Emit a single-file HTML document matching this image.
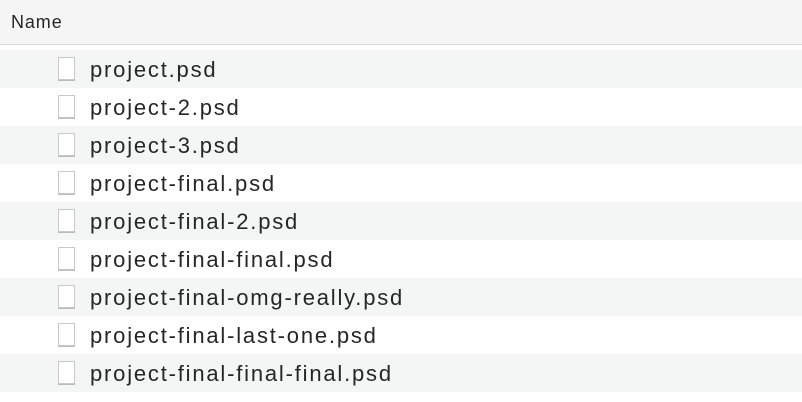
<!DOCTYPE html>
<html><head><style>
body{margin:0;width:802px;height:402px;overflow:hidden;background:#fff;font-family:"Liberation Sans",sans-serif;}
.h{height:44px;background:#f5f5f5;border-bottom:1px solid #d8d8d8;font-size:18px;letter-spacing:0.9px;color:#262626;line-height:44px;padding-left:11px;}
.gap{height:5px}
.r{height:38px;position:relative;font-size:22px;letter-spacing:1.8px;color:#262626;line-height:40px;}
.r:nth-child(odd){background:#f4f5f5}
.r span{position:absolute;left:90px;top:0}
.i{position:absolute;left:58px;top:7px;width:17px;height:23px;border:1px solid #c8c8c8;background:#fff;box-shadow:0 1px 0 #bbb;box-sizing:border-box}
</style></head><body>
<div class="h">Name</div>
<div class="gap"></div>
<div>
<div class="r"><div class="i"></div><span>project.psd</span></div>
<div class="r"><div class="i"></div><span>project-2.psd</span></div>
<div class="r"><div class="i"></div><span>project-3.psd</span></div>
<div class="r"><div class="i"></div><span>project-final.psd</span></div>
<div class="r"><div class="i"></div><span>project-final-2.psd</span></div>
<div class="r"><div class="i"></div><span>project-final-final.psd</span></div>
<div class="r"><div class="i"></div><span>project-final-omg-really.psd</span></div>
<div class="r"><div class="i"></div><span>project-final-last-one.psd</span></div>
<div class="r"><div class="i"></div><span>project-final-final-final.psd</span></div>
</div>
</body></html>
